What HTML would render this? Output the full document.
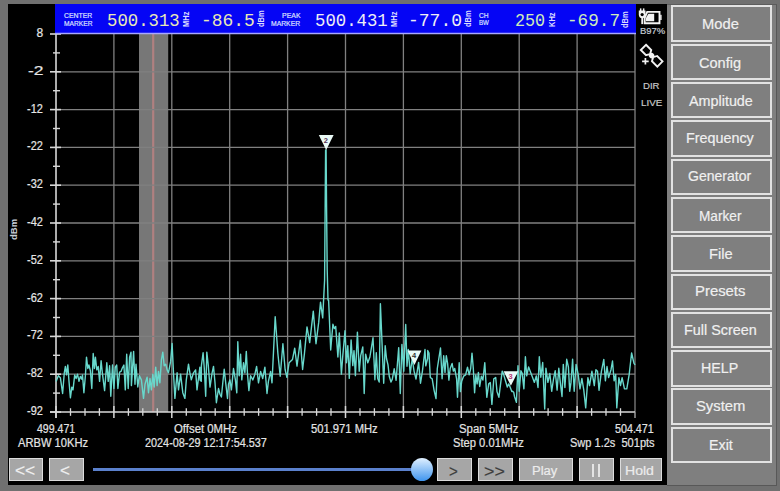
<!DOCTYPE html>
<html><head><meta charset="utf-8">
<style>
*{margin:0;padding:0;box-sizing:border-box}
html,body{width:780px;height:491px;overflow:hidden;background:#707070;font-family:"Liberation Sans",sans-serif}
.abs{position:absolute}
.t{position:absolute;white-space:nowrap;transform-origin:0 0;-webkit-text-stroke:0.2px currentColor}
#panel{position:absolute;left:667px;top:3.6px;width:110px;height:482.4px;background:#7f7f7f;border-top:1px solid #5c5c5c;border-right:1.2px solid #585858;border-bottom:1.2px solid #585858}
#main{position:absolute;left:8px;top:4.4px;width:659px;height:480.6px;background:#000}
#hdr{position:absolute;left:55px;top:4.2px;width:581px;height:29.4px;background:#0505f5}
svg{position:absolute;left:0;top:0}
.rb{position:absolute;left:671px;width:100.8px;height:36.4px;border:2.2px solid #e2e2e2;background:#7f7f7f;color:#f0f0f0;font-size:15px;text-align:center;line-height:31px;padding-right:2px}
.u{position:absolute;font-size:8.6px;line-height:8px;font-weight:bold;transform:rotate(-90deg) scaleX(0.87);transform-origin:0 0;white-space:nowrap}
.bb{position:absolute;top:458.2px;height:22.8px;border:1.9px solid #dcdcdc;background:#a6a6a6;color:#f4f4f4;font-size:14px;text-align:center;line-height:19px}
</style></head><body>
<div id="panel"></div>
<div id="main"></div>
<div id="hdr"></div>
<svg width="780" height="491" viewBox="0 0 780 491">
<rect x="139" y="34" width="29.2" height="378" fill="#777777"/>
<line x1="153.2" y1="34" x2="153.2" y2="412" stroke="#b08080" stroke-width="2.2"/>
<line x1="56" y1="71.8" x2="635" y2="71.8" stroke="#808080" stroke-width="1.3"/>
<line x1="56" y1="109.6" x2="635" y2="109.6" stroke="#808080" stroke-width="1.3"/>
<line x1="56" y1="147.4" x2="635" y2="147.4" stroke="#808080" stroke-width="1.3"/>
<line x1="56" y1="185.2" x2="635" y2="185.2" stroke="#808080" stroke-width="1.3"/>
<line x1="56" y1="223.0" x2="635" y2="223.0" stroke="#808080" stroke-width="1.3"/>
<line x1="56" y1="260.8" x2="635" y2="260.8" stroke="#808080" stroke-width="1.3"/>
<line x1="56" y1="298.6" x2="635" y2="298.6" stroke="#808080" stroke-width="1.3"/>
<line x1="56" y1="336.4" x2="635" y2="336.4" stroke="#808080" stroke-width="1.3"/>
<line x1="56" y1="374.2" x2="635" y2="374.2" stroke="#808080" stroke-width="1.3"/>
<line x1="113.9" y1="34" x2="113.9" y2="412" stroke="#808080" stroke-width="1.3"/>
<line x1="171.8" y1="34" x2="171.8" y2="412" stroke="#808080" stroke-width="1.3"/>
<line x1="229.7" y1="34" x2="229.7" y2="412" stroke="#808080" stroke-width="1.3"/>
<line x1="287.6" y1="34" x2="287.6" y2="412" stroke="#808080" stroke-width="1.3"/>
<line x1="345.5" y1="34" x2="345.5" y2="412" stroke="#808080" stroke-width="1.3"/>
<line x1="403.4" y1="34" x2="403.4" y2="412" stroke="#808080" stroke-width="1.3"/>
<line x1="461.3" y1="34" x2="461.3" y2="412" stroke="#808080" stroke-width="1.3"/>
<line x1="519.2" y1="34" x2="519.2" y2="412" stroke="#808080" stroke-width="1.3"/>
<line x1="577.1" y1="34" x2="577.1" y2="412" stroke="#808080" stroke-width="1.3"/>
<line x1="635.0" y1="34" x2="635.0" y2="412" stroke="#808080" stroke-width="1.3"/>
<line x1="56" y1="34" x2="56" y2="418" stroke="#d8d8d8" stroke-width="1.6"/>
<line x1="50" y1="412" x2="635" y2="412" stroke="#d8d8d8" stroke-width="1.6"/>
<line x1="635" y1="412" x2="635" y2="418" stroke="#b0b0b0" stroke-width="1.3"/>
<line x1="50" y1="34.0" x2="61" y2="34.0" stroke="#d8d8d8" stroke-width="1.6"/>
<line x1="53" y1="52.9" x2="60" y2="52.9" stroke="#d8d8d8" stroke-width="1.4"/>
<line x1="50" y1="71.8" x2="61" y2="71.8" stroke="#d8d8d8" stroke-width="1.6"/>
<line x1="53" y1="90.7" x2="60" y2="90.7" stroke="#d8d8d8" stroke-width="1.4"/>
<line x1="50" y1="109.6" x2="61" y2="109.6" stroke="#d8d8d8" stroke-width="1.6"/>
<line x1="53" y1="128.5" x2="60" y2="128.5" stroke="#d8d8d8" stroke-width="1.4"/>
<line x1="50" y1="147.4" x2="61" y2="147.4" stroke="#d8d8d8" stroke-width="1.6"/>
<line x1="53" y1="166.3" x2="60" y2="166.3" stroke="#d8d8d8" stroke-width="1.4"/>
<line x1="50" y1="185.2" x2="61" y2="185.2" stroke="#d8d8d8" stroke-width="1.6"/>
<line x1="53" y1="204.1" x2="60" y2="204.1" stroke="#d8d8d8" stroke-width="1.4"/>
<line x1="50" y1="223.0" x2="61" y2="223.0" stroke="#d8d8d8" stroke-width="1.6"/>
<line x1="53" y1="241.9" x2="60" y2="241.9" stroke="#d8d8d8" stroke-width="1.4"/>
<line x1="50" y1="260.8" x2="61" y2="260.8" stroke="#d8d8d8" stroke-width="1.6"/>
<line x1="53" y1="279.7" x2="60" y2="279.7" stroke="#d8d8d8" stroke-width="1.4"/>
<line x1="50" y1="298.6" x2="61" y2="298.6" stroke="#d8d8d8" stroke-width="1.6"/>
<line x1="53" y1="317.5" x2="60" y2="317.5" stroke="#d8d8d8" stroke-width="1.4"/>
<line x1="50" y1="336.4" x2="61" y2="336.4" stroke="#d8d8d8" stroke-width="1.6"/>
<line x1="53" y1="355.3" x2="60" y2="355.3" stroke="#d8d8d8" stroke-width="1.4"/>
<line x1="50" y1="374.2" x2="61" y2="374.2" stroke="#d8d8d8" stroke-width="1.6"/>
<line x1="53" y1="393.1" x2="60" y2="393.1" stroke="#d8d8d8" stroke-width="1.4"/>
<line x1="50" y1="412.0" x2="61" y2="412.0" stroke="#d8d8d8" stroke-width="1.6"/>
<line x1="56.0" y1="406" x2="56.0" y2="418" stroke="#d8d8d8" stroke-width="1.5"/>
<line x1="70.5" y1="408.2" x2="70.5" y2="415.8" stroke="#d8d8d8" stroke-width="1.3"/>
<line x1="85.0" y1="408.2" x2="85.0" y2="415.8" stroke="#d8d8d8" stroke-width="1.3"/>
<line x1="99.4" y1="408.2" x2="99.4" y2="415.8" stroke="#d8d8d8" stroke-width="1.3"/>
<line x1="113.9" y1="406" x2="113.9" y2="418" stroke="#d8d8d8" stroke-width="1.5"/>
<line x1="128.4" y1="408.2" x2="128.4" y2="415.8" stroke="#d8d8d8" stroke-width="1.3"/>
<line x1="142.8" y1="408.2" x2="142.8" y2="415.8" stroke="#d8d8d8" stroke-width="1.3"/>
<line x1="157.3" y1="408.2" x2="157.3" y2="415.8" stroke="#d8d8d8" stroke-width="1.3"/>
<line x1="171.8" y1="406" x2="171.8" y2="418" stroke="#d8d8d8" stroke-width="1.5"/>
<line x1="186.3" y1="408.2" x2="186.3" y2="415.8" stroke="#d8d8d8" stroke-width="1.3"/>
<line x1="200.8" y1="408.2" x2="200.8" y2="415.8" stroke="#d8d8d8" stroke-width="1.3"/>
<line x1="215.2" y1="408.2" x2="215.2" y2="415.8" stroke="#d8d8d8" stroke-width="1.3"/>
<line x1="229.7" y1="406" x2="229.7" y2="418" stroke="#d8d8d8" stroke-width="1.5"/>
<line x1="244.2" y1="408.2" x2="244.2" y2="415.8" stroke="#d8d8d8" stroke-width="1.3"/>
<line x1="258.6" y1="408.2" x2="258.6" y2="415.8" stroke="#d8d8d8" stroke-width="1.3"/>
<line x1="273.1" y1="408.2" x2="273.1" y2="415.8" stroke="#d8d8d8" stroke-width="1.3"/>
<line x1="287.6" y1="406" x2="287.6" y2="418" stroke="#d8d8d8" stroke-width="1.5"/>
<line x1="302.1" y1="408.2" x2="302.1" y2="415.8" stroke="#d8d8d8" stroke-width="1.3"/>
<line x1="316.6" y1="408.2" x2="316.6" y2="415.8" stroke="#d8d8d8" stroke-width="1.3"/>
<line x1="331.0" y1="408.2" x2="331.0" y2="415.8" stroke="#d8d8d8" stroke-width="1.3"/>
<line x1="345.5" y1="406" x2="345.5" y2="418" stroke="#d8d8d8" stroke-width="1.5"/>
<line x1="360.0" y1="408.2" x2="360.0" y2="415.8" stroke="#d8d8d8" stroke-width="1.3"/>
<line x1="374.4" y1="408.2" x2="374.4" y2="415.8" stroke="#d8d8d8" stroke-width="1.3"/>
<line x1="388.9" y1="408.2" x2="388.9" y2="415.8" stroke="#d8d8d8" stroke-width="1.3"/>
<line x1="403.4" y1="406" x2="403.4" y2="418" stroke="#d8d8d8" stroke-width="1.5"/>
<line x1="417.9" y1="408.2" x2="417.9" y2="415.8" stroke="#d8d8d8" stroke-width="1.3"/>
<line x1="432.3" y1="408.2" x2="432.3" y2="415.8" stroke="#d8d8d8" stroke-width="1.3"/>
<line x1="446.8" y1="408.2" x2="446.8" y2="415.8" stroke="#d8d8d8" stroke-width="1.3"/>
<line x1="461.3" y1="406" x2="461.3" y2="418" stroke="#d8d8d8" stroke-width="1.5"/>
<line x1="475.8" y1="408.2" x2="475.8" y2="415.8" stroke="#d8d8d8" stroke-width="1.3"/>
<line x1="490.2" y1="408.2" x2="490.2" y2="415.8" stroke="#d8d8d8" stroke-width="1.3"/>
<line x1="504.7" y1="408.2" x2="504.7" y2="415.8" stroke="#d8d8d8" stroke-width="1.3"/>
<line x1="519.2" y1="406" x2="519.2" y2="418" stroke="#d8d8d8" stroke-width="1.5"/>
<line x1="533.7" y1="408.2" x2="533.7" y2="415.8" stroke="#d8d8d8" stroke-width="1.3"/>
<line x1="548.1" y1="408.2" x2="548.1" y2="415.8" stroke="#d8d8d8" stroke-width="1.3"/>
<line x1="562.6" y1="408.2" x2="562.6" y2="415.8" stroke="#d8d8d8" stroke-width="1.3"/>
<line x1="577.1" y1="406" x2="577.1" y2="418" stroke="#d8d8d8" stroke-width="1.5"/>
<line x1="591.6" y1="408.2" x2="591.6" y2="415.8" stroke="#d8d8d8" stroke-width="1.3"/>
<line x1="606.0" y1="408.2" x2="606.0" y2="415.8" stroke="#d8d8d8" stroke-width="1.3"/>
<line x1="620.5" y1="408.2" x2="620.5" y2="415.8" stroke="#d8d8d8" stroke-width="1.3"/>
<polyline points="56.1,381.4 58.3,375.7 60.4,377.8 62.6,393.5 64.3,372.8 65.4,366.4 66.5,374.9 67.8,365.0 69.0,381.4 70.4,397.8 71.8,387.1 73.0,389.9 74.7,374.9 76.1,378.5 77.5,374.2 79.0,381.4 80.4,376.4 81.8,379.2 82.5,374.9 83.9,392.8 85.4,375.7 86.5,357.1 87.8,368.5 88.9,365.0 90.4,370.7 91.8,388.5 93.2,353.5 94.4,368.5 95.4,357.1 96.8,369.9 98.2,366.4 99.6,381.4 101.1,360.7 102.5,374.2 104.6,390.6 106.8,362.8 108.2,381.4 109.6,365.7 110.8,396.3 112.5,365.0 113.9,388.5 115.3,367.1 116.7,365.0 117.9,388.5 119.6,372.1 121.0,371.4 122.4,367.8 123.9,365.0 125.3,389.9 126.7,354.3 128.2,388.5 129.6,357.1 131.0,352.1 131.4,385.6 133.6,351.4 135.0,384.2 136.0,364.2 137.8,387.0 139.3,375.6 141.4,379.9 143.5,398.4 145.0,384.2 147.1,377.1 148.5,392.7 150.0,378.5 151.4,389.9 152.8,374.2 154.2,387.0 155.7,367.1 157.1,385.6 158.5,371.4 159.9,382.8 161.4,359.9 162.8,352.1 164.2,365.7 165.7,364.2 167.1,369.9 168.5,372.8 170.6,361.4 172.1,343.5 173.5,372.8 174.9,398.4 177.1,372.8 178.5,389.9 180.6,374.2 182.8,392.7 184.9,398.4 186.3,379.9 188.5,364.2 189.9,372.8 191.3,379.9 193.5,372.8 195.6,369.9 197.0,389.9 199.9,367.1 200.0,379.9 201.3,381.3 201.4,365.7 203.1,352.8 204.3,368.5 205.7,396.3 206.8,352.1 208.3,365.7 210.0,387.1 212.1,372.8 213.5,366.4 215.0,382.8 216.4,402.7 218.5,388.5 220.0,394.2 221.4,397.0 222.8,382.8 224.2,369.2 225.7,382.8 227.5,398.5 228.5,384.2 229.9,379.9 231.4,389.9 233.5,368.5 235.4,379.9 236.8,392.8 237.8,341.7 239.2,375.7 240.6,354.3 241.8,379.9 243.5,362.8 244.9,372.8 246.3,351.4 247.5,374.2 248.9,390.6 250.6,375.7 252.8,379.9 254.9,374.2 256.6,366.4 258.5,382.8 260.6,371.4 262.7,378.5 264.9,367.1 267.0,393.5 268.4,381.4 270.6,371.4 272.0,382.8 275.2,316.8 277.9,353.8 280.2,376.2 282.9,343.7 285.1,369.5 286.9,377.3 289.1,362.7 292.5,359.4 294.7,348.2 297.0,366.1 300.3,340.3 302.6,369.5 304.4,353.8 307.0,326.9 309.7,342.6 313.3,311.2 316.0,343.7 318.7,322.4 320.5,302.2 322.7,317.9 324.6,280 325.2,200 325.6,150 326.1,150 326.5,200 327.2,270 328.0,300 328.6,300.0 330.7,350.0 332.9,324.3 334.3,328.6 335.7,326.4 337.9,357.0 339.3,332.9 341.4,374.1 342.8,355.6 345.0,330.7 346.4,362.7 347.8,345.6 349.3,378.4 351.1,340.0 352.8,365.6 354.0,350.6 355.4,375.6 357.4,332.1 359.2,371.3 360.7,355.6 362.8,347.0 364.2,393.5 365.6,354.2 367.8,362.7 369.9,357.0 373.0,337.8 374.9,379.8 376.3,352.8 377.7,378.4 379.2,382 380.4,303.7 383.7,383.2 385.2,345.7 386.5,358.5 388.0,364.9 389.3,376.5 391.0,382 392.3,379.1 394.2,368.8 396.1,380.3 398.7,347.6 400.3,393.5 401.9,344.4 403.8,371.3 405.7,324.5 407.0,366.2 408.3,349.5 410.2,373.9 412.2,358.5 414.1,371.3 416.0,379.1 418.6,362.4 420.5,383.2 422.4,371.3 425.0,349.5 425.8,365.9 427.6,358.5 427.7,350.5 429.0,353.1 430.3,377.5 432.2,378.8 434.1,390.3 436.0,398.6 437.3,368.5 439.3,355.7 440.5,348.0 442.1,378.8 443.7,355.7 445.0,372.4 446.3,355.7 447.6,363.4 448.9,380.1 450.2,368.5 452.1,363.4 453.4,371.1 454.7,368.5 456.6,378.8 457.5,397.3 459.2,362.7 460.4,391.6 461.7,381.3 463.6,376.2 465.6,374.9 467.5,367.2 469.2,374.9 470.7,368.5 472.0,353.1 473.3,368.5 474.6,392.8 475.8,374.9 477.1,383.9 478.4,372.4 479.7,386.5 481.4,376.2 482.9,380.1 484.8,362.7 486.8,397.3 488.7,383.9 490.3,382.6 491.9,404.4 493.8,378.8 495.7,377.5 497.0,391.6 498.9,397.3 502.2,371.1 503.4,373.6 507.3,387 508.6,383.9 509.9,386.5 511.8,391.6 512.6,391.3 513.7,392.2 514.5,396.5 516.4,402.4 518.0,365.7 519.2,391.3 520.9,370.8 522.2,373.4 523.9,388.8 525.4,356.7 526.7,375.9 528.6,367.0 530.5,372.1 532.5,377.2 534.4,382.4 536.3,375.9 538.0,387.5 539.3,356.7 540.8,377.2 542.7,362.5 544.7,409 545.9,368.2 547.9,382.4 549.8,373.4 551.7,391.3 553.6,378.5 555.2,370.8 557.1,390.1 558.8,368.2 560.3,382.4 562.0,396.5 563.3,364.4 564.9,387.5 566.7,359.3 568.4,367.0 569.7,391.3 571.0,382.4 572.6,359.3 574.2,391.3 576.1,364.4 578.0,373.4 580.0,388.8 581.9,378.5 583.8,390.1 585.7,407.9 587.9,377.6 589.5,385.6 591.9,371.3 594.3,385.6 595.9,369.7 597.5,371.3 599.0,390.3 601.4,371.3 603.8,359.4 605.4,380.8 607.0,366.5 608.6,377.6 611.0,369.7 612.5,361.0 614.1,380.8 615.7,374.4 616.8,407.9 618.9,377.6 620.5,385.6 622.1,377.6 624.4,388.7 626.8,388.9 629.2,374.4 631.6,353.0 634.0,363.3 635.1,364.9" fill="none" stroke="#68d8cc" stroke-width="1.4" stroke-linejoin="round"/>
<polygon points="318.8,135.0 333.6,135.0 326.20000000000005,150.0" fill="#eafaf6"/><text x="325.80000000000007" y="143.0" font-size="7.5" font-weight="bold" fill="#553355" text-anchor="middle" font-family="Liberation Sans, sans-serif">2</text>
<polygon points="407.4,350.4 421.4,350.4 414.4,365" fill="#eafaf6"/><text x="414.0" y="358.4" font-size="7.5" font-weight="bold" fill="#303030" text-anchor="middle" font-family="Liberation Sans, sans-serif">4</text>
<polygon points="503.6,371.2 518.2,371.2 510.90000000000003,385.8" fill="#eafaf6"/><text x="510.50000000000006" y="379.2" font-size="7.5" font-weight="bold" fill="#b83070" text-anchor="middle" font-family="Liberation Sans, sans-serif">3</text>
<line x1="55" y1="33.5" x2="636" y2="33.5" stroke="#a8a8ff" stroke-width="1.6"/>
<g fill="#f4f4f4"><rect x="639.9" y="8.4" width="1.5" height="2.6"/><rect x="642.9" y="8.4" width="1.5" height="2.6"/><path d="M638.8,10.6 H645.5 V14.6 Q645.5,18.3 642.15,18.3 Q638.8,18.3 638.8,14.6 Z"/><rect x="641.3" y="17.5" width="1.8" height="6.6"/><rect x="660.2" y="14.8" width="1.4" height="5.2"/><path d="M648.4,13.8 H654.2 V21.2 H646.0 V17.8 Z"/></g><circle cx="642.15" cy="14.6" r="1.6" fill="#000"/><path d="M647.2,11.9 H659.5 V23.2 H644.7 V17.8 Z" fill="none" stroke="#f4f4f4" stroke-width="1.9"/>
<g transform="translate(651.6,55.6) rotate(45)" fill="#000" stroke="#f2f2f2" stroke-width="1.9"><path d="M-11.6,-3.7 H-4.2 L-2.2,0 L-4.2,3.7 H-11.6 Z"/><path d="M11.8,-3.7 H4.2 L2.2,0 L4.2,3.7 H11.8 Z"/><circle cx="0" cy="0" r="2.7" fill="#f2f2f2" stroke="none"/></g><path d="M642.1,61.3 H648.7 M645.4,58.0 V64.6" stroke="#f2f2f2" stroke-width="1.7"/>
</svg>
<div class="u" style="left:181.7px;top:27.2px;color:#dcdcff">MHz</div>
<div class="u" style="left:256.9px;top:27.3px;color:#dcdcff">dBm</div>
<div class="u" style="left:390.0px;top:27.2px;color:#dcdcff">MHz</div>
<div class="u" style="left:463.8px;top:27.3px;color:#dcdcff">dBm</div>
<div class="u" style="left:548.2px;top:26.5px;color:#dcdcff">KHz</div>
<div class="u" style="left:621.2px;top:28.0px;color:#dcdcff">dBm</div>

<div class="abs" style="left:8.6px;top:240.2px;transform:rotate(-90deg) scaleX(1.0);transform-origin:0 0;color:#c9cdd6;font-size:9.5px;line-height:9px;font-weight:bold">dBm</div>

<div class="bb" style="left:8.5px;width:34.5px"></div>
<div class="bb" style="left:49px;width:35px"></div>
<div class="abs" style="left:93px;top:468px;width:330px;height:2.5px;background:#5a80cc"></div>
<div class="abs" style="left:411px;top:458px;width:22px;height:23px;border-radius:50%;background:linear-gradient(#e0f0ff,#3f95ee)"></div>
<div class="bb" style="left:437px;width:35px"></div>
<div class="bb" style="left:478px;width:35px"></div>
<div class="bb" style="left:518.8px;width:54.2px"></div>
<div class="bb" style="left:579px;width:34.7px"></div>
<div class="bb" style="left:619.8px;width:41.9px"></div>
<div class="abs" style="left:592px;top:463.5px;width:1.6px;height:13.5px;background:#e4e4e4"></div>
<div class="abs" style="left:598px;top:463.5px;width:1.6px;height:13.5px;background:#e4e4e4"></div>


<div class="rb" style="top:4.90px;height:37.3px"></div>
<div class="rb" style="top:44.00px;height:36.4px"></div>
<div class="rb" style="top:82.00px;height:36.4px"></div>
<div class="rb" style="top:120.31px;height:36.4px"></div>
<div class="rb" style="top:158.62px;height:36.4px"></div>
<div class="rb" style="top:196.93px;height:36.4px"></div>
<div class="rb" style="top:235.24px;height:36.4px"></div>
<div class="rb" style="top:273.55px;height:36.4px"></div>
<div class="rb" style="top:311.86px;height:36.4px"></div>
<div class="rb" style="top:350.17px;height:36.4px"></div>
<div class="rb" style="top:388.48px;height:36.4px"></div>
<div class="rb" style="top:426.79px;height:36.4px"></div>

<div class="t" style="left:64.00px;top:10.80px;font-family:'Liberation Sans';font-size:7.5px;line-height:9px;color:#dde0ff;transform:scaleX(0.916)">CENTER</div>
<div class="t" style="left:64.00px;top:18.50px;font-family:'Liberation Sans';font-size:7.5px;line-height:9px;color:#dde0ff;transform:scaleX(0.888)">MARKER</div>
<div class="t" style="left:107.09px;top:8.60px;font-family:'Liberation Mono';font-size:19px;line-height:24px;color:#e9e9b6;transform:scaleX(0.910);-webkit-text-stroke:0">500.313</div>
<div class="t" style="left:200.97px;top:8.60px;font-family:'Liberation Mono';font-size:19px;line-height:24px;color:#e9e9b6;transform:scaleX(0.943);-webkit-text-stroke:0">-86.5</div>
<div class="t" style="left:282.00px;top:10.50px;font-family:'Liberation Sans';font-size:7.5px;line-height:9px;color:#dde0ff;transform:scaleX(0.925)">PEAK</div>
<div class="t" style="left:271.30px;top:18.50px;font-family:'Liberation Sans';font-size:7.5px;line-height:9px;color:#dde0ff;transform:scaleX(0.906)">MARKER</div>
<div class="t" style="left:314.79px;top:8.70px;font-family:'Liberation Mono';font-size:19px;line-height:24px;color:#eeeef4;transform:scaleX(0.910);-webkit-text-stroke:0">500.431</div>
<div class="t" style="left:408.46px;top:8.70px;font-family:'Liberation Mono';font-size:19px;line-height:24px;color:#eeeef4;transform:scaleX(0.947);-webkit-text-stroke:0">-77.0</div>
<div class="t" style="left:479.20px;top:10.90px;font-family:'Liberation Sans';font-size:7.5px;line-height:9px;color:#dde0ff;transform:scaleX(0.891)">CH</div>
<div class="t" style="left:479.20px;top:18.40px;font-family:'Liberation Sans';font-size:7.5px;line-height:9px;color:#dde0ff;transform:scaleX(0.817)">BW</div>
<div class="t" style="left:514.72px;top:8.70px;font-family:'Liberation Mono';font-size:19px;line-height:24px;color:#cfecb9;transform:scaleX(0.881);-webkit-text-stroke:0">250</div>
<div class="t" style="left:566.71px;top:8.70px;font-family:'Liberation Mono';font-size:19px;line-height:24px;color:#cfecb9;transform:scaleX(0.930);-webkit-text-stroke:0">-69.7</div>
<div class="t" style="left:36.60px;top:26.00px;font-family:'Liberation Sans';font-size:12px;line-height:15px;color:#e6e6e6;transform:scaleX(1.000)">8</div>
<div class="t" style="left:28.10px;top:63.80px;font-family:'Liberation Sans';font-size:12px;line-height:15px;color:#e6e6e6;transform:scaleX(1.450)">-2</div>
<div class="t" style="left:27.10px;top:101.60px;font-family:'Liberation Sans';font-size:12px;line-height:15px;color:#e6e6e6;transform:scaleX(0.912)">-12</div>
<div class="t" style="left:27.10px;top:139.40px;font-family:'Liberation Sans';font-size:12px;line-height:15px;color:#e6e6e6;transform:scaleX(0.912)">-22</div>
<div class="t" style="left:27.10px;top:177.20px;font-family:'Liberation Sans';font-size:12px;line-height:15px;color:#e6e6e6;transform:scaleX(0.912)">-32</div>
<div class="t" style="left:27.10px;top:215.00px;font-family:'Liberation Sans';font-size:12px;line-height:15px;color:#e6e6e6;transform:scaleX(0.912)">-42</div>
<div class="t" style="left:27.10px;top:252.80px;font-family:'Liberation Sans';font-size:12px;line-height:15px;color:#e6e6e6;transform:scaleX(0.912)">-52</div>
<div class="t" style="left:27.10px;top:290.60px;font-family:'Liberation Sans';font-size:12px;line-height:15px;color:#e6e6e6;transform:scaleX(0.912)">-62</div>
<div class="t" style="left:27.10px;top:328.40px;font-family:'Liberation Sans';font-size:12px;line-height:15px;color:#e6e6e6;transform:scaleX(0.912)">-72</div>
<div class="t" style="left:27.10px;top:366.20px;font-family:'Liberation Sans';font-size:12px;line-height:15px;color:#e6e6e6;transform:scaleX(0.912)">-82</div>
<div class="t" style="left:27.10px;top:404.00px;font-family:'Liberation Sans';font-size:12px;line-height:15px;color:#e6e6e6;transform:scaleX(0.912)">-92</div>
<div class="t" style="left:36.50px;top:421.60px;font-family:'Liberation Sans';font-size:12px;line-height:15px;color:#e4e4e4;transform:scaleX(0.879)">499.471</div>
<div class="t" style="left:174.20px;top:421.70px;font-family:'Liberation Sans';font-size:12px;line-height:15px;color:#e4e4e4;transform:scaleX(0.947)">Offset 0MHz</div>
<div class="t" style="left:311.47px;top:421.90px;font-family:'Liberation Sans';font-size:12px;line-height:15px;color:#e4e4e4;transform:scaleX(0.934)">501.971 MHz</div>
<div class="t" style="left:458.95px;top:421.70px;font-family:'Liberation Sans';font-size:12px;line-height:15px;color:#e4e4e4;transform:scaleX(0.949)">Span 5MHz</div>
<div class="t" style="left:614.91px;top:421.70px;font-family:'Liberation Sans';font-size:12px;line-height:15px;color:#e4e4e4;transform:scaleX(0.893)">504.471</div>
<div class="t" style="left:18.00px;top:435.80px;font-family:'Liberation Sans';font-size:12px;line-height:15px;color:#e4e4e4;transform:scaleX(0.929)">ARBW 10KHz</div>
<div class="t" style="left:145.00px;top:435.70px;font-family:'Liberation Sans';font-size:12px;line-height:15px;color:#e4e4e4;transform:scaleX(0.904)">2024-08-29 12:17:54.537</div>
<div class="t" style="left:453.17px;top:436.00px;font-family:'Liberation Sans';font-size:12px;line-height:15px;color:#e4e4e4;transform:scaleX(0.932)">Step 0.01MHz</div>
<div class="t" style="left:570.38px;top:435.80px;font-family:'Liberation Sans';font-size:12px;line-height:15px;color:#e4e4e4;transform:scaleX(0.919)">Swp 1.2s&nbsp; 501pts</div>
<div class="t" style="left:639.60px;top:24.90px;font-family:'Liberation Sans';font-size:9.5px;line-height:12px;color:#c4ccd4;transform:scaleX(0.996)">B97%</div>
<div class="t" style="left:643.49px;top:79.50px;font-family:'Liberation Sans';font-size:9.5px;line-height:12px;color:#c8c8c8;transform:scaleX(1.007)">DIR</div>
<div class="t" style="left:641.27px;top:96.80px;font-family:'Liberation Sans';font-size:9.5px;line-height:12px;color:#c8c8c8;transform:scaleX(1.032)">LIVE</div>
<div class="t" style="left:701.72px;top:14.10px;font-family:'Liberation Sans';font-size:15px;line-height:19px;color:#f0f0f0;transform:scaleX(0.981)">Mode</div>
<div class="t" style="left:698.83px;top:52.60px;font-family:'Liberation Sans';font-size:15px;line-height:19px;color:#f0f0f0;transform:scaleX(0.971)">Config</div>
<div class="t" style="left:688.75px;top:90.60px;font-family:'Liberation Sans';font-size:15px;line-height:19px;color:#f0f0f0;transform:scaleX(0.957)">Amplitude</div>
<div class="t" style="left:686.14px;top:127.91px;font-family:'Liberation Sans';font-size:15px;line-height:19px;color:#f0f0f0;transform:scaleX(0.956)">Frequency</div>
<div class="t" style="left:688.46px;top:166.22px;font-family:'Liberation Sans';font-size:15px;line-height:19px;color:#f0f0f0;transform:scaleX(0.936)">Generator</div>
<div class="t" style="left:698.79px;top:205.53px;font-family:'Liberation Sans';font-size:15px;line-height:19px;color:#f0f0f0;transform:scaleX(0.909)">Marker</div>
<div class="t" style="left:708.52px;top:243.84px;font-family:'Liberation Sans';font-size:15px;line-height:19px;color:#f0f0f0;transform:scaleX(0.978)">File</div>
<div class="t" style="left:695.01px;top:281.15px;font-family:'Liberation Sans';font-size:15px;line-height:19px;color:#f0f0f0;transform:scaleX(0.992)">Presets</div>
<div class="t" style="left:684.04px;top:320.46px;font-family:'Liberation Sans';font-size:15px;line-height:19px;color:#f0f0f0;transform:scaleX(0.959)">Full Screen</div>
<div class="t" style="left:701.05px;top:357.77px;font-family:'Liberation Sans';font-size:15px;line-height:19px;color:#f0f0f0;transform:scaleX(0.950)">HELP</div>
<div class="t" style="left:695.61px;top:396.08px;font-family:'Liberation Sans';font-size:15px;line-height:19px;color:#f0f0f0;transform:scaleX(0.987)">System</div>
<div class="t" style="left:708.55px;top:435.39px;font-family:'Liberation Sans';font-size:15px;line-height:19px;color:#f0f0f0;transform:scaleX(0.950)">Exit</div>
<div class="t" style="left:15.12px;top:461.20px;font-family:'Liberation Sans';font-size:16px;line-height:20px;color:#f0f0f0;transform:scaleX(1.082)">&lt;&lt;</div>
<div class="t" style="left:60.44px;top:461.20px;font-family:'Liberation Sans';font-size:16px;line-height:20px;color:#f0f0f0;transform:scaleX(1.062)">&lt;</div>
<div class="t" style="left:449.06px;top:461.60px;font-family:'Liberation Sans';font-size:16px;line-height:20px;color:#3c3c3c;transform:scaleX(0.938)">&gt;</div>
<div class="t" style="left:483.89px;top:461.60px;font-family:'Liberation Sans';font-size:16px;line-height:20px;color:#3c3c3c;transform:scaleX(1.112)">&gt;&gt;</div>
<div class="t" style="left:532.26px;top:462.80px;font-family:'Liberation Sans';font-size:12.5px;line-height:16px;color:#ececec;transform:scaleX(1.043)">Play</div>
<div class="t" style="left:625.38px;top:462.50px;font-family:'Liberation Sans';font-size:12.5px;line-height:16px;color:#ececec;transform:scaleX(1.125)">Hold</div>

</body></html>
